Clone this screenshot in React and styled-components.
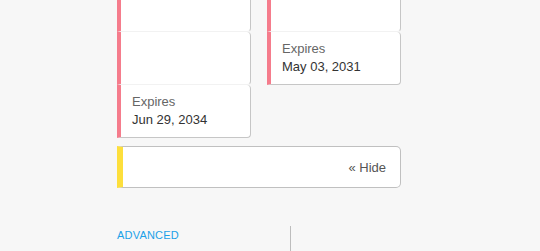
import React from 'react'
import styled, { createGlobalStyle } from 'styled-components'

const Global = createGlobalStyle`
  html, body {
    margin: 0;
    padding: 0;
    background: #f7f7f7;
    font-family: 'Liberation Sans', Arial, sans-serif;
  }
`

const Page = styled.div`
  width: 284px;
  margin-left: 117px;
  margin-top: -21px;
`

const Columns = styled.div`
  display: grid;
  grid-template-columns: 134px 134px;
  column-gap: 16px;
  align-items: start;
`

const Stack = styled.div`
  display: flex;
  flex-direction: column;
`

const Card = styled.div`
  box-sizing: border-box;
  height: 53px;
  padding: 8px 10px 0 11px;
  background: #fff;
  border-left: 4px solid #f57c8c;
  border-right: 1px solid #c6c6c6;
  border-bottom: 1px solid ${p => (p.$last ? '#c6c6c6' : '#f2f2f2')};
  border-radius: 0 4px 4px 0;
`

const Label = styled.div`
  font-size: 13px;
  line-height: 18px;
  color: #666;
`

const Value = styled.div`
  font-size: 13px;
  line-height: 18px;
  color: #333;
`

const Bar = styled.div`
  box-sizing: border-box;
  margin-top: 8px;
  height: 42px;
  display: flex;
  align-items: center;
  justify-content: flex-end;
  padding-right: 14px;
  background: #fff;
  border: 1px solid #c0c0c0;
  border-left: 6px solid #fddf3c;
  border-radius: 0 5px 5px 0;
`

const HideLink = styled.span`
  font-size: 13px;
  color: #555;
  cursor: pointer;
`

const Section = styled.div`
  margin-top: 38px;
  display: grid;
  grid-template-columns: 173px 1fr;
  height: 30px;
`

const SectionTitle = styled.div`
  padding-top: 1px;
  font-size: 11px;
  line-height: 16px;
  letter-spacing: 0.2px;
  color: #1ba1e8;
  text-transform: uppercase;
`

const SectionSide = styled.div`
  border-left: 1px solid #bdbdbd;
`

export default function App() {
  return (
    <>
      <Global />
      <Page>
        <Columns>
          <Stack>
            <Card />
            <Card />
            <Card $last>
              <Label>Expires</Label>
              <Value>Jun 29, 2034</Value>
            </Card>
          </Stack>
          <Stack>
            <Card />
            <Card $last>
              <Label>Expires</Label>
              <Value>May 03, 2031</Value>
            </Card>
          </Stack>
        </Columns>
        <Bar>
          <HideLink>« Hide</HideLink>
        </Bar>
        <Section>
          <SectionTitle>Advanced</SectionTitle>
          <SectionSide />
        </Section>
      </Page>
    </>
  )
}
